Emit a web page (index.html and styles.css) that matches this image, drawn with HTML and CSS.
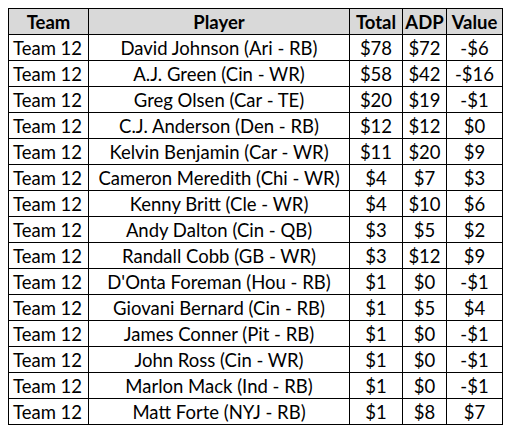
FILE: index.html
```html
<!DOCTYPE html>
<html>
<head>
<meta charset="utf-8">
<link rel="stylesheet" href="styles.css">
</head>
<body>
<table class="sheet">
  <colgroup>
    <col class="c-team">
    <col class="c-player">
    <col class="c-total">
    <col class="c-adp">
    <col class="c-value">
  </colgroup>
  <thead>
    <tr><th>Team</th><th>Player</th><th>Total</th><th>ADP</th><th>Value</th></tr>
  </thead>
  <tbody>
    <tr><td class="team">Team 12</td><td>David Johnson (Ari - RB)</td><td>$78</td><td>$72</td><td>-$6</td></tr>
    <tr><td class="team">Team 12</td><td>A.J. Green (Cin - WR)</td><td>$58</td><td>$42</td><td>-$16</td></tr>
    <tr><td class="team">Team 12</td><td>Greg Olsen (Car - TE)</td><td>$20</td><td>$19</td><td>-$1</td></tr>
    <tr><td class="team">Team 12</td><td>C.J. Anderson (Den - RB)</td><td>$12</td><td>$12</td><td>$0</td></tr>
    <tr><td class="team">Team 12</td><td>Kelvin Benjamin (Car - WR)</td><td>$11</td><td>$20</td><td>$9</td></tr>
    <tr><td class="team">Team 12</td><td>Cameron Meredith (Chi - WR)</td><td>$4</td><td>$7</td><td>$3</td></tr>
    <tr><td class="team">Team 12</td><td>Kenny Britt (Cle - WR)</td><td>$4</td><td>$10</td><td>$6</td></tr>
    <tr><td class="team">Team 12</td><td>Andy Dalton (Cin - QB)</td><td>$3</td><td>$5</td><td>$2</td></tr>
    <tr><td class="team">Team 12</td><td>Randall Cobb (GB - WR)</td><td>$3</td><td>$12</td><td>$9</td></tr>
    <tr><td class="team">Team 12</td><td>D'Onta Foreman (Hou - RB)</td><td>$1</td><td>$0</td><td>-$1</td></tr>
    <tr><td class="team">Team 12</td><td>Giovani Bernard (Cin - RB)</td><td>$1</td><td>$5</td><td>$4</td></tr>
    <tr><td class="team">Team 12</td><td>James Conner (Pit - RB)</td><td>$1</td><td>$0</td><td>-$1</td></tr>
    <tr><td class="team">Team 12</td><td>John Ross (Cin - WR)</td><td>$1</td><td>$0</td><td>-$1</td></tr>
    <tr><td class="team">Team 12</td><td>Marlon Mack (Ind - RB)</td><td>$1</td><td>$0</td><td>-$1</td></tr>
    <tr><td class="team">Team 12</td><td>Matt Forte (NYJ - RB)</td><td>$1</td><td>$8</td><td>$7</td></tr>
  </tbody>
</table>
</body>
</html>
```
FILE: styles.css
```css
html, body {
  margin: 0;
  background: #ffffff;
}
body {
  padding: 8px;
}
.sheet {
  border-collapse: collapse;
  table-layout: fixed;
  width: 495px;
  font-family: "Lato", "Liberation Sans", sans-serif;
  font-size: 18.5px;
  color: #000000;
}
.c-team { width: 80px; }
.c-player { width: 261px; }
.c-total { width: 53px; }
.c-adp { width: 44px; }
.c-value { width: 56px; }
.sheet th,
.sheet td {
  border: 1px solid #000000;
  height: 26px;
  padding: 1px 2px 0;
  text-align: center;
  white-space: nowrap;
  line-height: 22px;
  box-sizing: border-box;
}
.sheet th {
  background: #d9d9d9;
  font-weight: 700;
}
.sheet td.team {
  text-align: left;
  padding-left: 4px;
}
```
